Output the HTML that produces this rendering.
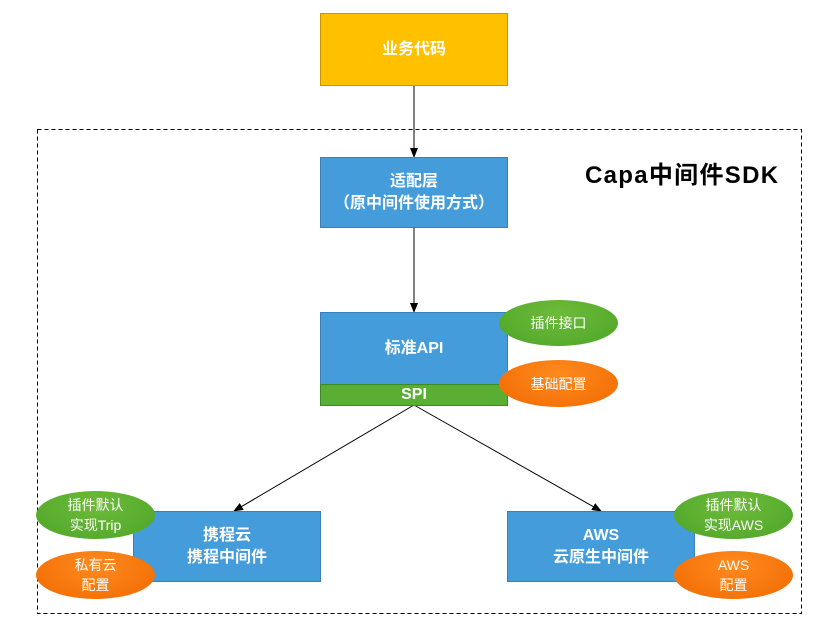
<!DOCTYPE html>
<html><head><meta charset="utf-8"><style>
body{margin:0;width:825px;height:620px;background:#fff;position:relative;overflow:hidden;font-family:"Liberation Sans","Noto Sans CJK SC",sans-serif}
.b{position:absolute;box-sizing:border-box;display:flex;align-items:center;justify-content:center;text-align:center;color:#fff;font-weight:bold;font-size:16px;line-height:22px}
.blue{background:#449CDA;border:1px solid #3A7FB8}
.e{position:absolute;border-radius:50%;display:flex;align-items:center;justify-content:center;text-align:center;color:#fff;font-size:14px;line-height:20px}
.g{background:radial-gradient(ellipse at 50% 30%,#6DBB3A,#4EA527);}
.o{background:radial-gradient(ellipse at 50% 30%,#FF8A1F,#F06A00);}
svg{position:absolute;left:0;top:0}
</style></head><body>
<svg width="825" height="620">
<defs><marker id="a" markerWidth="10" markerHeight="10" refX="9" refY="5" orient="auto" markerUnits="userSpaceOnUse"><path d="M0,1 L10,5 L0,9 z" fill="#000"/></marker></defs>
<rect x="37.5" y="129.5" width="764" height="484" fill="none" stroke="#000" stroke-dasharray="4,3"/>
<line x1="414" y1="86" x2="414" y2="157" stroke="#000" marker-end="url(#a)"/>
<line x1="414" y1="228" x2="414" y2="312" stroke="#000" marker-end="url(#a)"/>
<line x1="414" y1="405" x2="234" y2="511" stroke="#000" marker-end="url(#a)"/>
<line x1="414" y1="405" x2="601" y2="511" stroke="#000" marker-end="url(#a)"/>
</svg>
<div class="b" style="left:320px;top:13px;width:188px;height:73px;background:#FFC000;border:1px solid #C89600">业务代码</div>
<div class="b blue" style="left:320px;top:157px;width:188px;height:71px">适配层<br>（原中间件使用方式）</div>
<div class="b blue" style="left:320px;top:312px;width:188px;height:73px">标准API</div>
<div class="b" style="left:320px;top:384px;width:188px;height:22px;background:#5AAE33;border:1px solid #3E8A22">SPI</div>
<div class="b blue" style="left:133px;top:511px;width:188px;height:71px">携程云<br>携程中间件</div>
<div class="b blue" style="left:507px;top:511px;width:188px;height:71px">AWS<br>云原生中间件</div>
<div style="position:absolute;left:585px;top:155px;font-size:24px;letter-spacing:1.3px;font-weight:bold;color:#000">Capa中间件SDK</div>
<div class="e g" style="left:499px;top:300px;width:119px;height:46px">插件接口</div>
<div class="e o" style="left:499px;top:360px;width:119px;height:47px">基础配置</div>
<div class="e g" style="left:36px;top:491px;width:119px;height:48px">插件默认<br>实现Trip</div>
<div class="e o" style="left:36px;top:551px;width:119px;height:48px">私有云<br>配置</div>
<div class="e g" style="left:674px;top:491px;width:119px;height:48px">插件默认<br>实现AWS</div>
<div class="e o" style="left:674px;top:551px;width:119px;height:48px">AWS<br>配置</div>
</body></html>
